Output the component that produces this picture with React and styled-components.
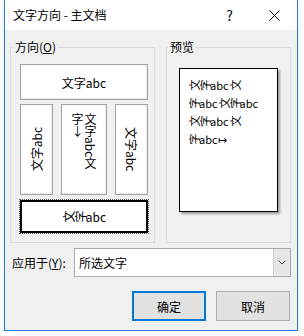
import React from "react";
import styled, { createGlobalStyle } from "styled-components";

const GlobalStyle = createGlobalStyle`
  body {
    margin: 0;
    background: #fff;
    font-family: "Noto Sans CJK SC", "Noto Sans", sans-serif;
    font-size: 12px;
    color: #000;
  }
`;

const Window = styled.div`
  margin-left: 4px;
  width: 294px;
  height: 331px;
  box-sizing: border-box;
  border: 1px solid #2b79d0;
  border-top: none;
  background: #f0f0f0;
  display: flex;
  flex-direction: column;
  box-shadow: 0 2px 6px rgba(43, 121, 208, 0.18);
`;

const TitleBar = styled.div`
  height: 30px;
  flex: none;
  background: #fff;
  display: flex;
  align-items: center;
  padding-left: 8px;
`;

const Title = styled.div`
  flex: 1;
  font-size: 12px;
  line-height: 30px;
`;

const TitleButton = styled.div`
  width: 45px;
  height: 30px;
  display: flex;
  align-items: center;
  justify-content: center;
  font-size: 14px;
`;

const Body = styled.div`
  flex: 1;
  display: flex;
  flex-direction: column;
  padding: 9px 6px 0 5px;
`;

const Groups = styled.div`
  display: flex;
  gap: 11px;
  height: 204px;
`;

const Group = styled.fieldset`
  margin: 0;
  min-width: 0;
  box-sizing: border-box;
  width: ${p => p.$width}px;
  border: 1px solid #dcdcdc;
  padding: ${p => p.$padTop}px 6px 9px ${p => p.$padLeft}px;
  display: flex;
  flex-direction: column;
  gap: 4px;
`;

const Legend = styled.legend`
  padding: 0 2px;
  margin-left: ${p => p.$shift}px;
  line-height: 16px;
  font-size: 12px;
`;

const Key = styled.span`
  text-decoration: underline;
`;

const OptionBox = styled.div`
  box-sizing: border-box;
  background: #fff;
  border: 1px solid #a3a3a3;
  box-shadow: inset -1px -1px 0 #ebebeb, inset 1px 1px 0 #fbfbfb;
  display: flex;
  align-items: center;
  justify-content: center;
  height: ${p => p.$height}px;
  width: ${p => (p.$width ? `${p.$width}px` : "auto")};
`;

const SelectedBox = styled(OptionBox)`
  border: 2px solid #000;
  outline: 1px dotted #555;
  outline-offset: 0;
  box-shadow: none;
  margin: 1px 0 0;
  height: 33px;
`;

const VerticalRow = styled.div`
  display: flex;
  gap: 8px;
`;

const UpText = styled.span`
  writing-mode: vertical-rl;
  text-orientation: sideways;
  transform: rotate(180deg);
`;

const DownText = styled.span`
  writing-mode: vertical-rl;
  text-orientation: sideways;
`;

const StackText = styled.div`
  writing-mode: vertical-rl;
  height: 64px;
  line-height: 13px;
  align-self: flex-start;
  margin-top: 8px;
`;

const Arrow = styled.span`
  text-orientation: upright;
`;

const Rot = styled.span`
  display: inline-block;
  transform: rotate(-90deg);
`;

const PreviewPage = styled.div`
  width: 99px;
  height: 144px;
  box-sizing: border-box;
  border: 1px solid #000;
  background: #fff;
  box-shadow: 2px 2px 2px rgba(0, 0, 0, 0.35);
  padding: 7px 0 0 8px;
  font-size: 11px;
  line-height: 18px;
  white-space: nowrap;
`;

const ApplyRow = styled.div`
  margin-top: 5px;
  height: 29px;
  display: flex;
  align-items: center;
`;

const ApplyLabel = styled.div`
  width: 64px;
  padding-left: 2px;
  box-sizing: border-box;
`;

const Select = styled.div`
  flex: 1;
  height: 29px;
  box-sizing: border-box;
  background: #fff;
  border: 1px solid #a9a9a9;
  display: flex;
  align-items: center;
`;

const SelectValue = styled.div`
  flex: 1;
  padding-left: 4px;
`;

const DropButton = styled.div`
  width: 16px;
  align-self: stretch;
  background: #e6e6e6;
  border-left: 1px solid #cfcfcf;
  display: flex;
  align-items: center;
  justify-content: center;
`;

const ButtonRow = styled.div`
  margin-top: 14px;
  display: flex;
  justify-content: flex-end;
  gap: 10px;
  padding-right: 1px;
`;

const Button = styled.div`
  width: 74px;
  height: 30px;
  box-sizing: border-box;
  background: #e1e1e1;
  border: ${p => (p.$default ? "2px solid #0078d7" : "1px solid #adadad")};
  display: flex;
  align-items: center;
  justify-content: center;
`;

export default function App() {
  return (
    <>
      <GlobalStyle />
      <Window>
        <TitleBar>
          <Title>文字方向 - 主文档</Title>
          <TitleButton>?</TitleButton>
          <TitleButton>
            <svg width="11" height="11" viewBox="0 0 11 11">
              <path d="M0.5 0.5L10.5 10.5M10.5 0.5L0.5 10.5" stroke="#000" strokeWidth="1" />
            </svg>
          </TitleButton>
        </TitleBar>
        <Body>
          <Groups>
            <Group $width={145} $padTop={9} $padLeft={9}>
              <Legend $shift={-7}>
                方向(<Key>O</Key>)
              </Legend>
              <OptionBox $height={36}>文字abc</OptionBox>
              <VerticalRow>
                <OptionBox $height={91} $width={33}>
                  <UpText>文字abc</UpText>
                </OptionBox>
                <OptionBox $height={91} $width={46}>
                  <StackText>
                    文字abc文字<Arrow>↓</Arrow>
                  </StackText>
                </OptionBox>
                <OptionBox $height={91} $width={33}>
                  <DownText>文字abc</DownText>
                </OptionBox>
              </VerticalRow>
              <SelectedBox>
                <Rot>文</Rot>
                <Rot>字</Rot>abc
              </SelectedBox>
            </Group>
            <Group $width={125} $padTop={13} $padLeft={12}>
              <Legend $shift={-11}>预览</Legend>
              <PreviewPage>
                <div>
                  <Rot>文</Rot><Rot>字</Rot>abc<Rot>文</Rot>
                </div>
                <div>
                  <Rot>字</Rot>abc<Rot>文</Rot><Rot>字</Rot>abc
                </div>
                <div>
                  <Rot>文</Rot><Rot>字</Rot>abc<Rot>文</Rot>
                </div>
                <div>
                  <Rot>字</Rot>abc↦
                </div>
              </PreviewPage>
            </Group>
          </Groups>
          <ApplyRow>
            <ApplyLabel>
              应用于(<Key>Y</Key>):
            </ApplyLabel>
            <Select>
              <SelectValue>所选文字</SelectValue>
              <DropButton>
                <svg width="8" height="5" viewBox="0 0 8 5">
                  <path d="M0.5 0.5L4 4L7.5 0.5" fill="none" stroke="#444" strokeWidth="1" />
                </svg>
              </DropButton>
            </Select>
          </ApplyRow>
          <ButtonRow>
            <Button $default>确定</Button>
            <Button>取消</Button>
          </ButtonRow>
        </Body>
      </Window>
    </>
  );
}
